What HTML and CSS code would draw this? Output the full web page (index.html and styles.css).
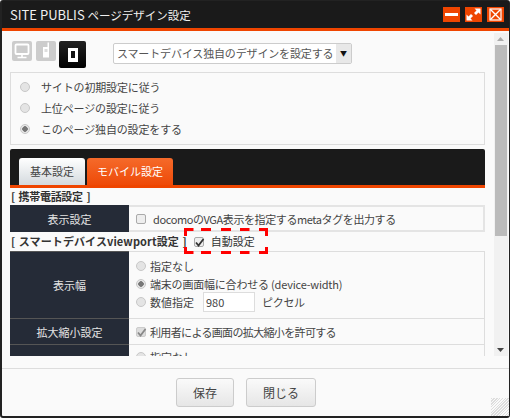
FILE: index.html
```html
<!DOCTYPE html>
<html lang="ja">
<head>
<meta charset="utf-8">
<title>SITE PUBLIS</title>
<link rel="stylesheet" href="styles.css">
</head>
<body>
<div class="window">
  <header class="titlebar">
    <h1 class="title">SITE PUBLIS <span class="title-ja">ページデザイン設定</span></h1>
    <div class="winbtns">
      <span class="winbtn"><svg width="17" height="15" viewBox="0 0 17 15"><rect x="2" y="6" width="13" height="3" fill="#fff"/></svg></span>
      <span class="winbtn"><svg width="17" height="15" viewBox="0 0 17 15"><path d="M9.500 1.500H15.500V7.500L13.500 5.500L11 8L9 6L11.500 3.500ZM7.500 13.500H1.500V7.500L3.500 9.500L6 7L8 9L5.500 11.500Z" fill="#fff"/></svg></span>
      <span class="winbtn"><svg width="17" height="15" viewBox="0 0 17 15"><rect x="3" y="2" width="11" height="11" fill="none" stroke="#fff" stroke-width="1.200"/><path d="M3.500 2.500L13.500 12.500M13.500 2.500L3.500 12.500" stroke="#fff" stroke-width="1.400"/></svg></span>
    </div>
  </header>
  <div class="body">
    <main class="scroller">
      <div class="devices">
        <div class="devicons">
          <span class="dev"><svg width="20" height="20" viewBox="0 0 20 20"><rect x="3.500" y="3.500" width="13" height="9.500" rx="1" fill="none" stroke="#fff" stroke-width="1.800"/><path d="M10 13V16M5.500 16.500H14.500" stroke="#fff" stroke-width="1.600"/></svg></span>
          <span class="dev"><svg width="20" height="20" viewBox="0 0 20 20"><path d="M7 6H11.500V1.500H13V16.500H7Z" fill="#fff"/><rect x="8.500" y="8" width="3" height="3" fill="#ddd"/></svg></span>
          <span class="dev dev-on"><svg width="27" height="27" viewBox="0 0 27 27"><rect x="9" y="7" width="10" height="14" fill="#fff"/><rect x="12" y="10" width="4" height="7" fill="#111"/></svg></span>
        </div>
        <div class="select"><span class="select-text">スマートデバイス独自のデザインを設定する</span><span class="select-arrow">▼</span></div>
      </div>
      <section class="radiobox">
        <label class="opt"><span class="radio"></span>サイトの初期設定に従う</label>
        <label class="opt"><span class="radio"></span>上位ページの設定に従う</label>
        <label class="opt"><span class="radio radio-on"></span>このページ独自の設定をする</label>
      </section>
      <nav class="tabs">
        <span class="tab">基本設定</span>
        <span class="tab tab-on">モバイル設定</span>
      </nav>
      <h2 class="heading">[ 携帯電話設定 ]</h2>
      <div class="rows">
        <div class="row row-first">
          <div class="th">表示設定</div>
          <div class="td"><label class="line line-docomo"><span class="check"></span>docomoのVGA表示を指定するmetaタグを出力する</label></div>
        </div>
      </div>
      <h2 class="heading heading2">[ スマートデバイスviewport設定 ]
        <label class="auto"><span class="check check-on"><svg width="11" height="11" viewBox="0 0 11 11"><path d="M2 5.500L4.500 8.500L9.500 2" fill="none" stroke="#333" stroke-width="1.800"/></svg></span>自動設定</label>
        <svg class="dash" width="84" height="26" viewBox="0 0 84 26"><path d="M0 1.500H84M0 24.500H84" fill="none" stroke="#f00" stroke-width="3" stroke-dasharray="9.500 7.500 10 10 10 9 9.500 9.500 8.500"/><path d="M1.500 0V8M1.500 19V26M82.500 0V8M82.500 19V26" fill="none" stroke="#f00" stroke-width="3"/></svg>
      </h2>
      <div class="rows">
        <div class="row row-a">
          <div class="th">表示幅</div>
          <div class="td td-stack">
            <label class="line"><span class="radio radio-sm"></span>指定なし</label>
            <label class="line line-device"><span class="radio radio-sm radio-on"></span>端末の画面幅に合わせる (device-width)</label>
            <label class="line"><span class="radio radio-sm"></span>数値指定<span class="input">980</span><span class="unit">ピクセル</span></label>
          </div>
        </div>
        <div class="row row-b">
          <div class="th">拡大縮小設定</div>
          <div class="td"><label class="line line-zoom"><span class="check check-off"><svg width="11" height="11" viewBox="0 0 11 11"><path d="M2 5.500L4.500 8.500L9.500 2" fill="none" stroke="#888" stroke-width="1.800"/></svg></span>利用者による画面の拡大縮小を許可する</label></div>
        </div>
        <div class="row row-c">
          <div class="th"></div>
          <div class="td td-stack"><label class="line"><span class="radio radio-sm"></span>指定なし</label></div>
        </div>
      </div>
    </main>
    <aside class="scrollbar">
      <svg class="arrow" width="13" height="12" viewBox="0 0 13 12"><path d="M3 8L6.500 4L10 8Z" fill="#aaa"/></svg>
      <div class="track"><div class="thumb"></div></div>
      <svg class="arrow" width="13" height="12" viewBox="0 0 13 12"><path d="M3 4L6.500 8L10 4Z" fill="#444"/></svg>
    </aside>
  </div>
  <footer class="footer">
    <button class="btn btn-save">保存</button>
    <button class="btn btn-close">閉じる</button>
    <span class="grip"></span>
  </footer>
</div>
</body>
</html>
```
FILE: styles.css
```css
* { box-sizing: border-box; }
html, body { margin: 0; padding: 0; }
body {
  width: 510px;
  height: 419px;
  overflow: hidden;
  background: #fff;
  font-family: "Noto Sans CJK JP", "Open Sans", sans-serif;
  font-size: 11px;
  color: #444;
}
.window {
  width: 510px;
  height: 418px;
  display: flex;
  flex-direction: column;
  background: #fafafa;
  border: 1px solid #222;
  border-width: 1px 1px 2px 2px;
  border-radius: 3px;
}
.titlebar {
  height: 30px;
  flex: none;
  display: flex;
  align-items: center;
  justify-content: space-between;
  padding: 0 5px 1px 8px;
  background: #1a1a1a;
  border-bottom: 3px solid #ef4500;
}
.title {
  margin: 0;
  font-size: 13px;
  font-weight: 400;
  color: #f0f0f0;
}
.title-ja { font-size: 11.500px; }
.winbtns { display: flex; gap: 5px; }
.winbtn {
  width: 17px;
  height: 15px;
  background: #ef4500;
  display: block;
}
.winbtn svg { display: block; }
.body {
  flex: none;
  height: 325px;
  display: flex;
  padding-right: 2px;
}
.scroller {
  flex: none;
  height: 325px;
  overflow: hidden;
  padding-left: 8px;
  padding-right: 8px;
  width: 492px;
}
.devices {
  display: flex;
  align-items: flex-start;
  height: 41px;
  padding-top: 10px;
  padding-left: 2px;
}
.devicons { display: flex; gap: 4px; width: 101px; align-items: flex-start; }
.dev {
  width: 20px;
  height: 20px;
  background: #ccc;
  border-radius: 2px;
  display: block;
}
.dev svg { display: block; }
.dev-on {
  width: 27px;
  height: 27px;
  background: linear-gradient(#222, #000);
  margin-left: -1px;
}
.select {
  width: 239px;
  height: 21px;
  margin-top: 2px;
  display: flex;
  background: #fff;
  border: 1px solid #ccc;
  border-radius: 2px;
  line-height: 19px;
  color: #555;
}
.select-text { flex: 1; padding-left: 3px; white-space: nowrap; letter-spacing: -0.150px; }
.select-arrow {
  width: 15px;
  flex: none;
  background: #e8e8e8;
  color: #111;
  font-size: 7px;
  text-align: center;
}
.radiobox {
  height: 73px;
  width: 475px;
  border: 1px solid #ddd;
  padding: 3px 9px;
  background: #fafafa;
  letter-spacing: -0.150px;
}
.opt {
  display: flex;
  align-items: center;
  height: 21px;
}
.radio {
  width: 10px;
  height: 10px;
  flex: none;
  margin-right: 11px;
  border-radius: 50%;
  border: 1px solid #c8c8c8;
  background: #e4e4e4;
  display: block;
}
.radio-sm { margin-left: 7px; margin-right: 4px; }
.radio-on {
  background: radial-gradient(circle, #777 0, #777 2.500px, #e8e8e8 3px);
}
.tabs {
  margin-top: 4px;
  width: 475px;
  height: 39px;
  padding: 9px 0 0 9px;
  display: flex;
  gap: 2px;
  background: #1a1a1a;
  border-bottom: 3px solid #ef4500;
  border-radius: 2px 2px 0 0;
}
.tab {
  width: 66px;
  height: 27px;
  background: linear-gradient(#fff, #d4dade);
  border-radius: 3px 3px 0 0;
  text-align: center;
  line-height: 27px;
  color: #444;
}
.tab-on {
  width: 86px;
  background: linear-gradient(#f56a2a, #ee4a08);
  color: #fff;
}
.heading {
  margin: 0;
  height: 17px;
  padding-left: 1px;
  font-size: 11px;
  line-height: 17px;
  font-weight: 700;
  color: #333;
  white-space: nowrap;
  word-spacing: 1.500px;
  letter-spacing: -0.300px;
}
.heading2 {
  position: relative;
  height: 19px;
  display: flex;
  align-items: center;
  word-spacing: 1px;
  letter-spacing: 0.100px;
}
.auto {
  display: flex;
  align-items: center;
  font-weight: 400;
  letter-spacing: 0;
  margin-left: 7px;
  color: #333;
}
.dash {
  position: absolute;
  left: 174px;
  top: -4px;
}
.rows { width: 475px; }
.row { display: flex; border-top: 1px solid #ddd; }
.row-first { height: 27px; border-top: 0; }
.row-first .td { border: 2px solid #e4e4e4; border-left: 0; }
.row-a { height: 67px; }
.row-b { height: 26px; }
.row-c { height: 30px; }
.th {
  width: 119px;
  flex: none;
  background: #252b37;
  color: #e4e4e4;
  display: flex;
  align-items: center;
  justify-content: center;
  border-top: 1px solid #555;
  margin-top: -1px;
}
.row-first .th { border-top: 0; margin-top: 0; }
.td {
  flex: 1;
  display: flex;
  align-items: center;
  padding-left: 7px;
  border-right: 1px solid #ddd;
}
.td-stack { flex-direction: column; align-items: flex-start; justify-content: center; padding-left: 0; padding-bottom: 2px; }
.row-c .td-stack { justify-content: flex-start; padding: 3px 0 0; }
.line { display: flex; align-items: center; height: 18px; white-space: nowrap; }
.line-docomo { letter-spacing: -0.400px; }
.line-device { letter-spacing: -0.200px; }
.line-zoom { letter-spacing: -0.650px; }
.unit { letter-spacing: -0.300px; }
.check {
  width: 10px;
  height: 10px;
  flex: none;
  margin-right: 7px;
  border: 1px solid #aaa;
  border-radius: 2px;
  background: #eee;
  display: block;
}
.check svg { display: block; margin: -1px; }
.check-on { margin-right: 7px; }
.check-off { margin-right: 4px; border-color: #ccc; background: #ddd; }
.input {
  width: 52px;
  height: 20px;
  margin: 0 7px 0 9px;
  padding-left: 2px;
  border: 1px solid #ddd;
  background: #fff;
  line-height: 18px;
}
.scrollbar {
  width: 14px;
  flex: none;
  background: #f1f1f1;
  display: flex;
  flex-direction: column;
  margin-top: 2px;
}
.arrow { display: block; flex: none; }
.track { flex: 1; padding: 0 1px; }
.thumb { height: 191px; background: #bbb; }
.footer {
  position: relative;
  flex: 1;
  margin-top: 12px;
  border-top: 1px solid #ddd;
  display: flex;
  padding: 9px 0 0 174px;
  gap: 12px;
}
.btn {
  height: 29px;
  font: inherit;
  font-size: 12px;
  color: #444;
  border: 1px solid #ccc;
  border-radius: 3px;
  background: linear-gradient(#fafafa, #e6e6e6);
  padding: 0;
}
.btn-save { width: 58px; }
.btn-close { width: 70px; }
.grip {
  position: absolute;
  right: 0;
  bottom: 0;
  width: 18px;
  height: 18px;
  background: repeating-linear-gradient(135deg, #ddd 0, #ddd 1px, #fafafa 1px, #fafafa 2px);
}
```
